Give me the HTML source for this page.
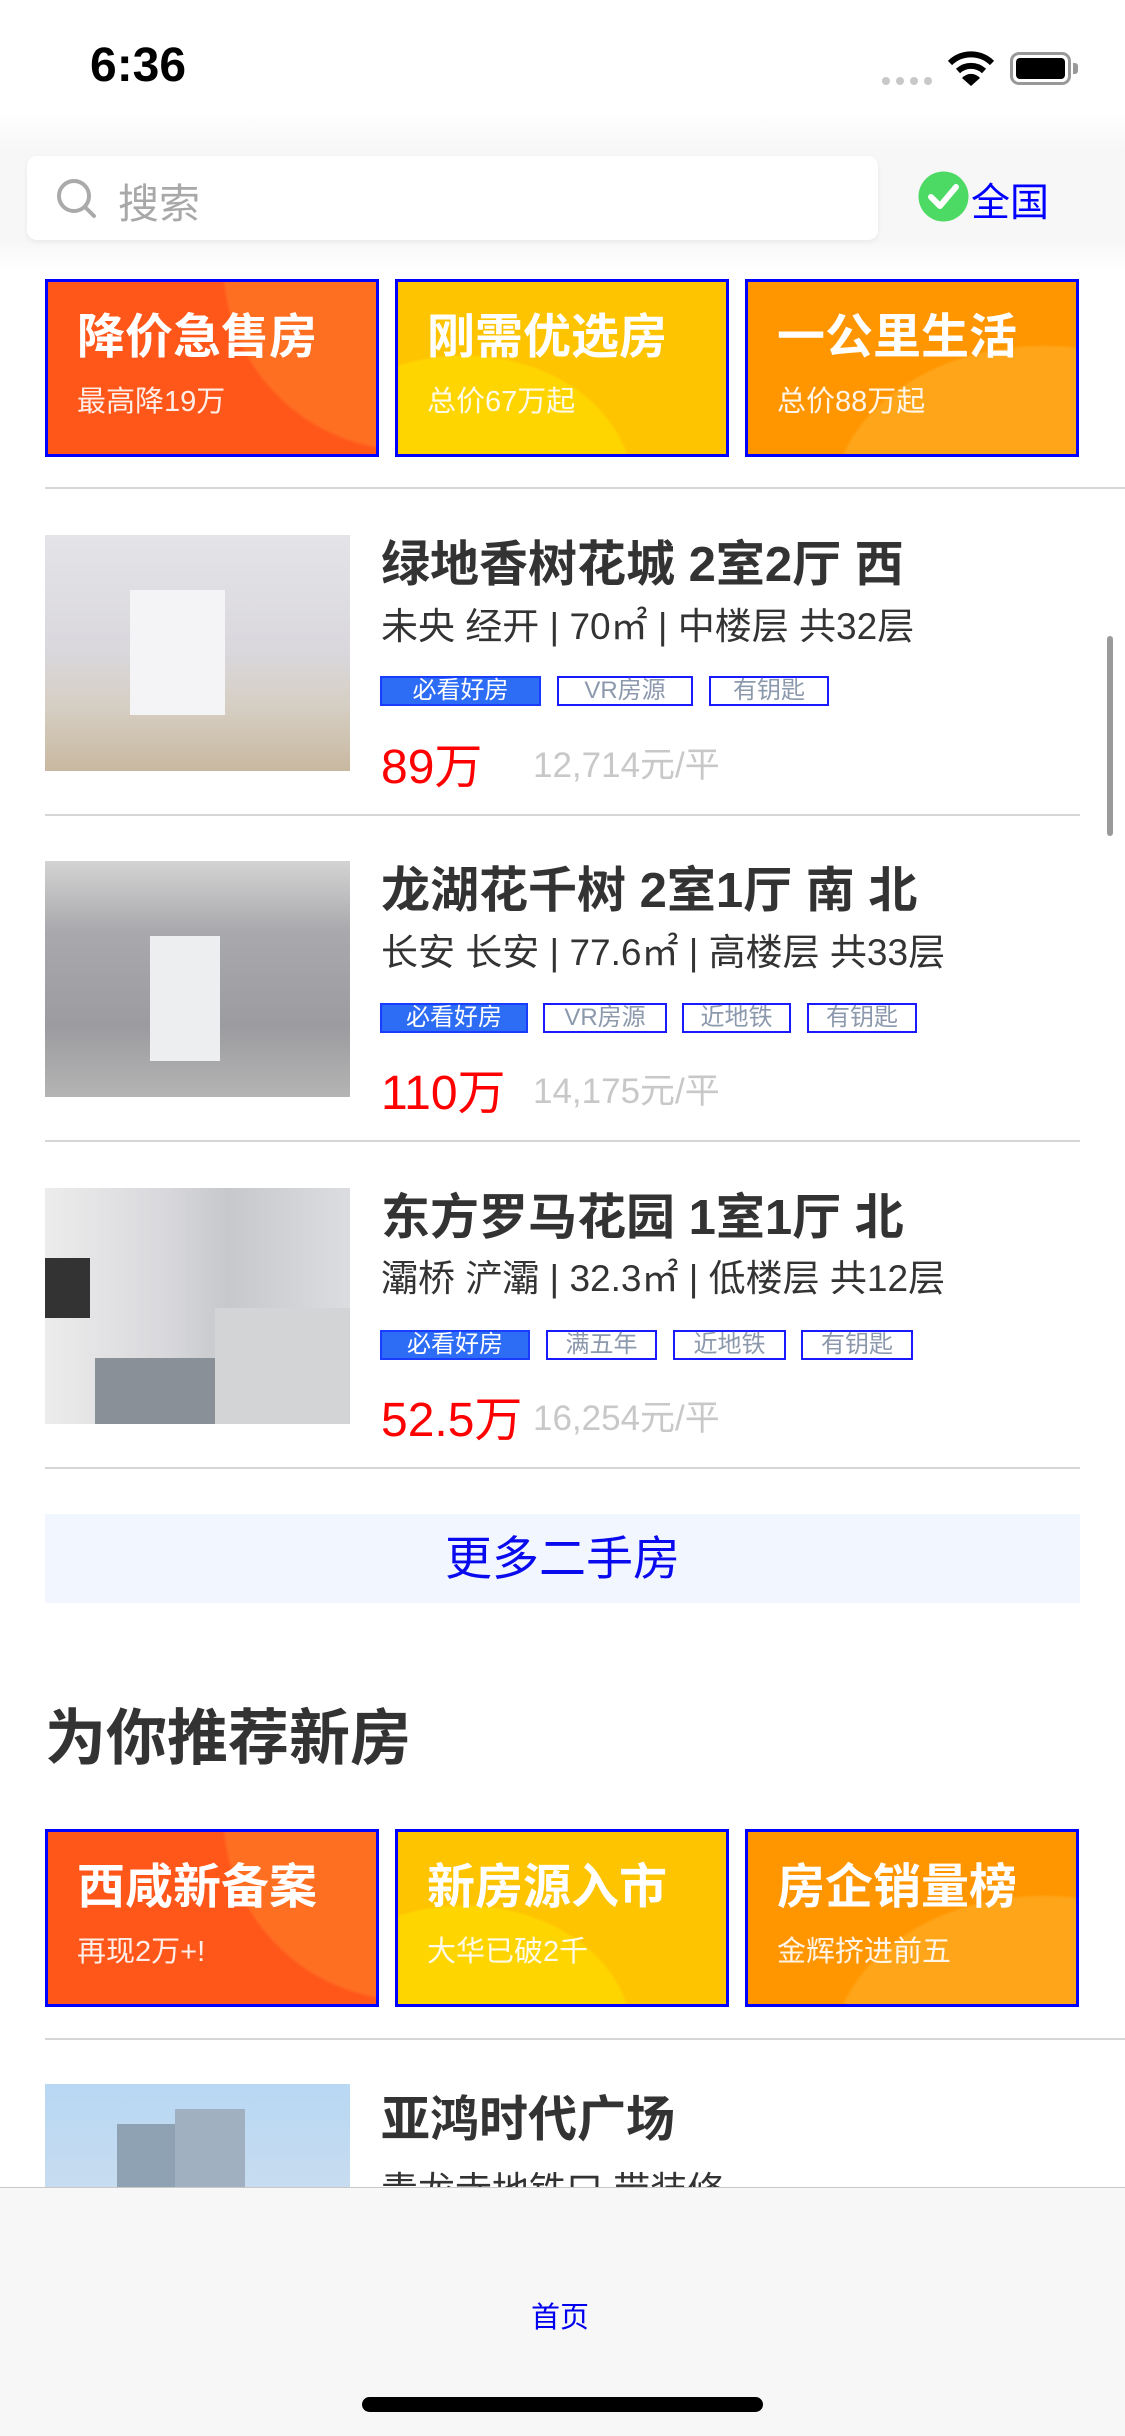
<!DOCTYPE html>
<html><head><meta charset="utf-8">
<style>
*{margin:0;padding:0;box-sizing:border-box}
body{width:1125px;height:2436px;position:relative;overflow:hidden;background:#fff;font-family:"Liberation Sans","Noto Sans CJK SC",sans-serif}
.a{position:absolute;white-space:nowrap}
.hdr{left:0;top:0;width:1125px;height:270px;background:linear-gradient(#fff 0,#fff 110px,#f7f7f7 150px,#f7f7f7 240px,#fff 270px)}
.card{position:absolute;width:334px;height:178px;border:3px solid #0000ff;overflow:hidden}
.card .t{position:absolute;left:29px;top:28px;font-size:48px;font-weight:bold;color:#fff;line-height:56px}
.card .s{position:absolute;left:29px;top:96px;font-size:29px;color:#fff;opacity:.9}
.c1{background:radial-gradient(circle at 110% -10%,#ff6f22 0,#ff6f22 45%,transparent 46%),#ff5619}
.c2{background:radial-gradient(ellipse at 20% 120%,#ffd500 0,#ffd500 45%,transparent 46%),#ffc400}
.c3{background:radial-gradient(ellipse at 90% 130%,#ffa51a 0,#ffa51a 50%,transparent 51%),#ff9600}
.div{position:absolute;height:2px;background:#d6d6d6}
.img{position:absolute;left:45px;width:305px;height:236px}
.ti{position:absolute;left:381px;font-size:49px;font-weight:bold;color:#333}
.sub{position:absolute;left:381px;font-size:37px;color:#333}
.tag{position:absolute;height:30px;border:2px solid #1a1aff;color:#8c99ad;font-size:24px;line-height:26px;text-align:center}
.tag.f{background:#2d6df6;color:#fff;border-color:#1a3cff}
.pr{position:absolute;left:381px;font-size:48px;color:#ff0000}
.pp{position:absolute;font-size:35px;color:#c8c8c8}
</style></head><body>
<div class="a hdr"></div>
<div class="a" style="left:90px;top:38px;font-size:48px;font-weight:bold;color:#000">6:36</div>
<div class="a" style="left:882px;top:77px;width:8px;height:8px;border-radius:4px;background:#c8c8c8"></div>
<div class="a" style="left:896px;top:77px;width:8px;height:8px;border-radius:4px;background:#c8c8c8"></div>
<div class="a" style="left:910px;top:77px;width:8px;height:8px;border-radius:4px;background:#c8c8c8"></div>
<div class="a" style="left:924px;top:77px;width:8px;height:8px;border-radius:4px;background:#c8c8c8"></div>
<svg class="a" style="left:947px;top:51px" width="48" height="36" viewBox="0 0 48 36">
<path d="M3 12 A30 30 0 0 1 45 12" stroke="#000" stroke-width="6" fill="none"/>
<path d="M11 20 A19 19 0 0 1 37 20" stroke="#000" stroke-width="6" fill="none"/>
<path d="M24 35 L15 27 A12 12 0 0 1 33 27 Z" fill="#000"/></svg>
<div class="a" style="left:1010px;top:52px;width:61px;height:33px;border:3px solid #999;border-radius:9px"></div>
<div class="a" style="left:1016px;top:58px;width:49px;height:21px;background:#000;border-radius:4px"></div>
<div class="a" style="left:1073px;top:63px;width:5px;height:11px;background:#999;border-radius:0 3px 3px 0"></div>

<div class="a" style="left:27px;top:156px;width:851px;height:84px;background:#fff;border-radius:10px;box-shadow:0 2px 6px rgba(0,0,0,.06)"></div>
<svg class="a" style="left:56px;top:178px" width="42" height="42" viewBox="0 0 42 42"><circle cx="18" cy="18" r="15" stroke="#aaa" stroke-width="4" fill="none"/><path d="M29 29 L38 38" stroke="#aaa" stroke-width="4" stroke-linecap="round"/></svg>
<div class="a" style="left:118px;top:170px;font-size:41px;color:#a8a8a8">搜索</div>
<svg class="a" style="left:918px;top:171px" width="51" height="51" viewBox="0 0 51 51"><circle cx="25.5" cy="25.5" r="25" fill="#4cd964"/><path d="M13 26 L22 35 L38 16" stroke="#fff" stroke-width="6" fill="none" stroke-linecap="round" stroke-linejoin="round"/></svg>
<div class="a" style="left:971px;top:172px;font-size:39px;color:#0000ff">全国</div>

<div class="card c1" style="left:45px;top:279px"><div class="t">降价急售房</div><div class="s">最高降19万</div></div>
<div class="card c2" style="left:395px;top:279px"><div class="t">刚需优选房</div><div class="s">总价67万起</div></div>
<div class="card c3" style="left:745px;top:279px"><div class="t">一公里生活</div><div class="s">总价88万起</div></div>
<div class="div" style="left:45px;top:487px;width:1080px"></div>

<!-- listing 1 -->
<div class="img" style="top:535px;background:linear-gradient(180deg,#e4e4e8 0,#d9d7dc 50%,#d6cfc4 72%,#c8b8a0 100%)"><div style="position:absolute;left:85px;top:55px;width:95px;height:125px;background:#f4f4f6"></div></div>
<div class="ti" style="top:525px">绿地香树花城 2室2厅 西</div>
<div class="sub" style="top:596px">未央 经开 | 70㎡ | 中楼层 共32层</div>
<div class="tag f" style="left:380px;top:676px;width:161px">必看好房</div>
<div class="tag" style="left:557px;top:676px;width:136px">VR房源</div>
<div class="tag" style="left:709px;top:676px;width:120px">有钥匙</div>
<div class="pr" style="top:727px">89万</div>
<div class="pp" style="left:533px;top:737px">12,714元/平</div>
<div class="div" style="left:45px;top:814px;width:1035px"></div>

<!-- listing 2 -->
<div class="img" style="top:861px;background:linear-gradient(180deg,#d3d3d3 0,#a9a9ad 30%,#9c9ca0 70%,#b4b4b4 100%)"><div style="position:absolute;left:105px;top:75px;width:70px;height:125px;background:#eceef0"></div></div>
<div class="ti" style="top:851px">龙湖花千树 2室1厅 南 北</div>
<div class="sub" style="top:922px">长安 长安 | 77.6㎡ | 高楼层 共33层</div>
<div class="tag f" style="left:380px;top:1003px;width:148px">必看好房</div>
<div class="tag" style="left:543px;top:1003px;width:124px">VR房源</div>
<div class="tag" style="left:682px;top:1003px;width:109px">近地铁</div>
<div class="tag" style="left:807px;top:1003px;width:110px">有钥匙</div>
<div class="pr" style="top:1053px">110万</div>
<div class="pp" style="left:533px;top:1063px">14,175元/平</div>
<div class="div" style="left:45px;top:1140px;width:1035px"></div>

<!-- listing 3 -->
<div class="img" style="top:1188px;background:linear-gradient(90deg,#ececec 0,#d8d8dc 40%,#c6c8cc 60%,#dcdde0 100%)"><div style="position:absolute;left:0;top:70px;width:45px;height:60px;background:#333"></div><div style="position:absolute;left:170px;top:120px;width:135px;height:116px;background:#d2d4d6"></div><div style="position:absolute;left:50px;top:170px;width:120px;height:66px;background:#8a9098"></div></div>
<div class="ti" style="top:1178px">东方罗马花园 1室1厅 北</div>
<div class="sub" style="top:1248px">灞桥 浐灞 | 32.3㎡ | 低楼层 共12层</div>
<div class="tag f" style="left:380px;top:1330px;width:150px">必看好房</div>
<div class="tag" style="left:546px;top:1330px;width:111px">满五年</div>
<div class="tag" style="left:673px;top:1330px;width:113px">近地铁</div>
<div class="tag" style="left:801px;top:1330px;width:112px">有钥匙</div>
<div class="pr" style="top:1380px">52.5万</div>
<div class="pp" style="left:533px;top:1390px">16,254元/平</div>
<div class="div" style="left:45px;top:1467px;width:1035px"></div>

<div class="a" style="left:45px;top:1514px;width:1035px;height:89px;background:#f2f6ff;text-align:center;font-size:47px;line-height:89px;color:#0a0aee">更多二手房</div>
<div class="a" style="left:45px;top:1688px;font-size:61px;font-weight:bold;color:#333">为你推荐新房</div>

<div class="card c1" style="left:45px;top:1829px"><div class="t">西咸新备案</div><div class="s">再现2万+!</div></div>
<div class="card c2" style="left:395px;top:1829px"><div class="t">新房源入市</div><div class="s">大华已破2千</div></div>
<div class="card c3" style="left:745px;top:1829px"><div class="t">房企销量榜</div><div class="s">金辉挤进前五</div></div>
<div class="div" style="left:45px;top:2038px;width:1080px"></div>

<div class="img" style="top:2084px;height:110px;background:linear-gradient(180deg,#b8d8f4 0,#c8dcef 100%)"><div style="position:absolute;left:72px;top:40px;width:60px;height:70px;background:#8ea2b4"></div><div style="position:absolute;left:130px;top:25px;width:70px;height:85px;background:#a0b0c0"></div></div>
<div class="ti" style="top:2080px">亚鸿时代广场</div>
<div class="sub" style="top:2160px">青龙寺地铁口 带装修</div>

<div class="a" style="left:0;top:2187px;width:1125px;height:249px;background:#f7f7f7;border-top:1px solid #c8c8c8"></div>
<div class="a" style="left:531px;top:2294px;font-size:29px;color:#0000ee">首页</div>
<div class="a" style="left:362px;top:2397px;width:401px;height:15px;border-radius:8px;background:#000"></div>
<div class="a" style="left:1107px;top:636px;width:6px;height:200px;border-radius:3px;background:#9a9a9a"></div>
</body></html>
